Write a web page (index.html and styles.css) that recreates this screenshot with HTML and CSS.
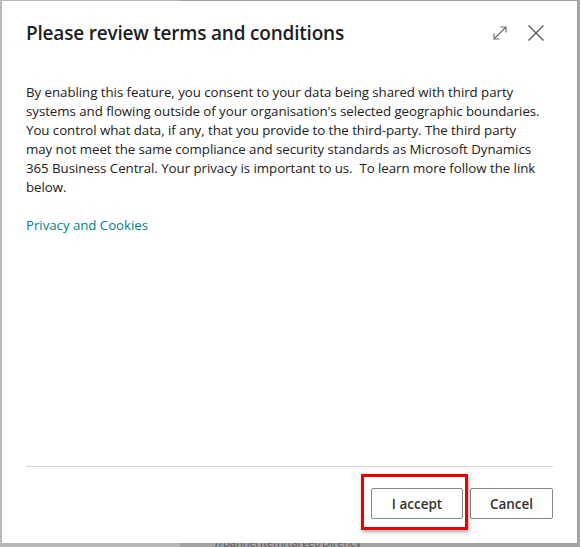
FILE: index.html
```html
<!DOCTYPE html>
<html>
<head>
<meta charset="utf-8">
<link rel="stylesheet" href="styles.css">
</head>
<body>
<div class="backdrop">
  <div class="dialog">
    <div class="header">
      <h1 class="title">Please review terms and conditions</h1>
      <div class="actions">
        <svg class="icon expand" width="16" height="16" viewBox="0 0 16 16" fill="none" stroke="#6e6e6e" stroke-width="1.2">
          <path d="M2 14 L14 2"/>
          <path d="M8.5 2 H14 V7.5"/>
          <path d="M2 8.5 V14 H7.5"/>
        </svg>
        <svg class="icon close" width="18" height="18" viewBox="0 0 18 18" fill="none" stroke="#5a5a5a" stroke-width="1.4">
          <path d="M1.5 1.5 L16.5 16.5 M16.5 1.5 L1.5 16.5"/>
        </svg>
      </div>
    </div>
    <div class="content">
      <p class="text">By enabling this feature, you consent to your data being shared with third party systems and flowing outside of your organisation's selected geographic boundaries. You control what data, if any, that you provide to the third-party. The third party may not meet the same compliance and security standards as Microsoft Dynamics 365 Business Central. Your privacy is important to us.&nbsp; To learn more follow the link below.</p>
      <a class="link" href="#">Privacy and Cookies</a>
    </div>
    <div class="footer">
      <div class="buttons">
        <button class="btn accept">I accept</button>
        <button class="btn">Cancel</button>
        <div class="highlight"></div>
      </div>
    </div>
  </div>
  <div class="behind">//bannerItem/target/Dirency</div>
</div>
</body>
</html>
```

FILE: styles.css
```css
* { box-sizing: border-box; }
html, body {
  margin: 0;
  padding: 0;
  width: 580px;
  height: 547px;
  overflow: hidden;
}
body {
  background: #a8a8a8;
  font-family: "Open Sans", "Noto Sans", "Liberation Sans", sans-serif;
  color: #212121;
}
.backdrop {
  position: relative;
  padding: 1px 3px 0 2px;
  height: 547px;
  background: linear-gradient(to right, #b8b8b8 0, #b8b8b8 180px, #a4a4a4 180px);
}
.dialog {
  width: 575px;
  height: 542px;
  background: #ffffff;
  display: flex;
  flex-direction: column;
  position: relative;
  z-index: 1;
}
.header {
  display: flex;
  align-items: center;
  justify-content: space-between;
  padding: 13px 32px 0 24px;
  height: 50px;
}
.title {
  margin: 0;
  font-size: 19px;
  font-weight: 600;
  letter-spacing: -0.2px;
  color: #212121;
}
.actions {
  display: flex;
  align-items: center;
  gap: 19px;
}
.icon { display: block; }
.expand { margin-top: 1px; }
.content {
  flex: 1;
  padding: 32px 0 0 24px;
}
.text {
  margin: 0;
  width: 515px;
  font-size: 13.3px;
  line-height: 19px;
  letter-spacing: -0.05px;
  color: #212121;
}
.link {
  display: inline-block;
  margin-top: 19px;
  font-size: 13.3px;
  line-height: 19px;
  letter-spacing: -0.05px;
  color: #00838a;
  text-decoration: none;
}
.footer {
  margin: 0 24px 0 24px;
  border-top: 1px solid #d6d6d6;
  height: 77px;
}
.buttons {
  position: relative;
  display: flex;
  justify-content: flex-end;
  gap: 7px;
  padding-top: 21px;
}
.btn {
  font-family: inherit;
  font-size: 13.5px;
  font-weight: 600;
  color: #323130;
  background: #ffffff;
  border: 1px solid #8a8886;
  border-radius: 2px;
  height: 31px;
  padding: 0 18px;
}
.accept { width: 92px; }
.btn:not(.accept) { width: 83px; }
.highlight {
  position: absolute;
  left: 335px;
  top: 7px;
  width: 107px;
  height: 56px;
  border: 3px solid #ee0000;
  box-shadow: 1px 2px 4px rgba(0,0,0,0.35);
  pointer-events: none;
}
.behind {
  position: absolute;
  left: 215px;
  top: 536px;
  font-size: 11px;
  line-height: 14px;
  color: #555;
}
```
